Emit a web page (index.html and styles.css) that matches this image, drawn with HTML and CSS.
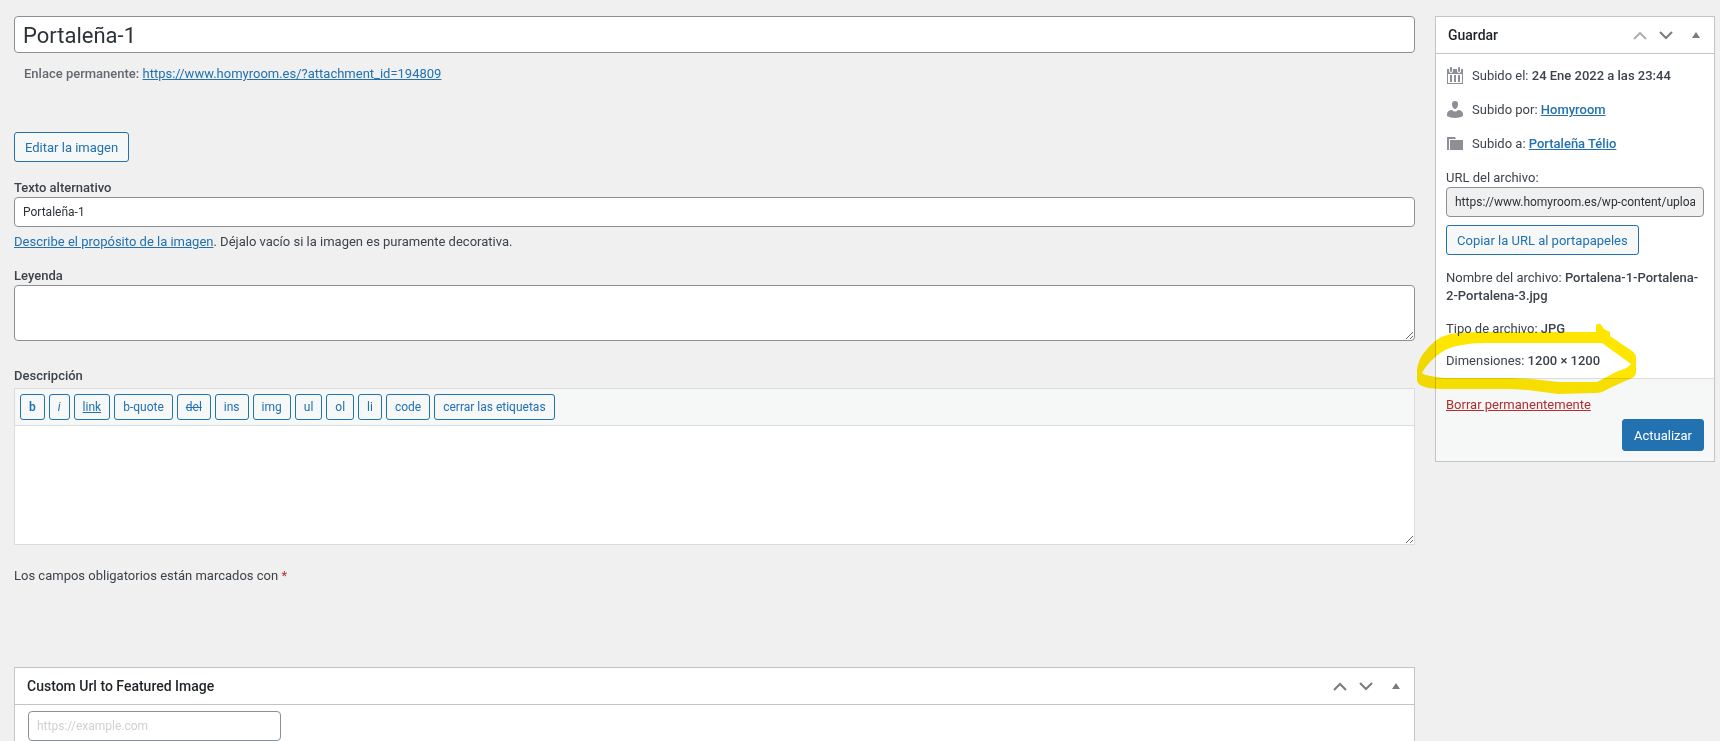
FILE: index.html
```html
<!DOCTYPE html>
<html lang="es">

<head>
	<meta charset="UTF-8">
	<meta name="viewport" content="width=device-width, initial-scale=1">
	<title>Editar medio</title>
	<link rel="stylesheet" href="styles.css">
</head>

<body>
	<form id="post">
		<div id="post-body">
			<input type="text" id="title" aria-label="Título" value="Portaleña-1">
			<p id="edit-slug"><strong>Enlace permanente:</strong> <a href="#">https://www.homyroom.es/?attachment_id=194809</a></p>

			<button type="button" class="button" id="edit-image">Editar la imagen</button>

			<div class="field">
				<label for="alt">Texto alternativo</label>
				<input type="text" id="alt" value="Portaleña-1">
				<p class="help"><a href="#">Describe el propósito de la imagen</a>. Déjalo vacío si la imagen es puramente decorativa.</p>
			</div>

			<div class="field">
				<label for="caption">Leyenda</label>
				<textarea id="caption"></textarea>
			</div>

			<div class="field description">
				<label for="content">Descripción</label>
				<div class="editor">
					<div class="quicktags">
						<button type="button" class="button small bold">b</button>
						<button type="button" class="button small italic">i</button>
						<button type="button" class="button small underline">link</button>
						<button type="button" class="button small">b-quote</button>
						<button type="button" class="button small strike">del</button>
						<button type="button" class="button small">ins</button>
						<button type="button" class="button small">img</button>
						<button type="button" class="button small">ul</button>
						<button type="button" class="button small">ol</button>
						<button type="button" class="button small">li</button>
						<button type="button" class="button small">code</button>
						<button type="button" class="button small">cerrar las etiquetas</button>
					</div>
					<textarea id="content"></textarea>
				</div>
			</div>

			<p class="required-note">Los campos obligatorios están marcados con <span class="required">*</span></p>

			<div class="postbox" id="custom-url">
				<div class="postbox-header">
					<h2>Custom Url to Featured Image</h2>
					<div class="handle-actions">
						<button type="button" aria-label="Subir"><svg width="14" height="9" viewBox="0 0 14 9"><path d="M1 8l6-6 6 6"/></svg></button>
						<button type="button" aria-label="Bajar"><svg width="14" height="9" viewBox="0 0 14 9"><path d="M1 1l6 6 6-6"/></svg></button>
						<button type="button" class="toggle" aria-label="Alternar panel"><svg width="8" height="9" viewBox="0 0 8 9"><path d="M4 1l4 6H0z"/></svg></button>
					</div>
				</div>
				<div class="inside">
					<input type="url" aria-label="Custom Url" placeholder="https://example.com">
				</div>
			</div>
		</div>

		<div id="side">
			<div class="postbox">
				<div class="postbox-header">
					<h2>Guardar</h2>
					<div class="handle-actions">
						<button type="button" class="off" aria-label="Subir"><svg width="14" height="9" viewBox="0 0 14 9"><path d="M1 8l6-6 6 6"/></svg></button>
						<button type="button" aria-label="Bajar"><svg width="14" height="9" viewBox="0 0 14 9"><path d="M1 1l6 6 6-6"/></svg></button>
						<button type="button" class="toggle" aria-label="Alternar panel"><svg width="8" height="9" viewBox="0 0 8 9"><path d="M4 1l4 6H0z"/></svg></button>
					</div>
				</div>
				<div class="misc">
					<p class="row">
						<svg class="icon" width="18" height="18" viewBox="0 0 18 18">
							<path fill-rule="evenodd" d="M1 2h16v15H1zM2 7v9h14V7z"/>
							<path d="M4 8h2v7H4zM8 8h2v7H8zM12 8h2v7h-2z"/>
							<path class="ring" d="M3 0h4v4a2 2 0 0 1-4 0zM11 0h4v4a2 2 0 0 1-4 0z"/>
							<path d="M4 1a1 1 0 0 1 2 0v3a1 1 0 0 1-2 0zM12 1a1 1 0 0 1 2 0v3a1 1 0 0 1-2 0z"/>
						</svg>
						<span>Subido el: <b>24 Ene 2022 a las 23:44</b></span>
					</p>
					<p class="row">
						<svg class="icon" width="18" height="18" viewBox="0 0 18 18"><path d="M9 0c2 0 3 1 3 3S11 8 9 8 6 5 6 3s1-3 3-3zM6 9q3 3 6 0c3 0 5 2 5 4v2c-2 1-5 2-8 2s-6-1-8-2v-2c0-2 2-4 5-4z"/></svg>
						<span>Subido por: <a href="#"><b>Homyroom</b></a></span>
					</p>
					<p class="row">
						<svg class="icon" width="18" height="18" viewBox="0 0 18 18"><path d="M1 2h8l1 2H3v11H1zM4 5h13v10H4z"/></svg>
						<span>Subido a: <a href="#"><b>Portaleña Télio</b></a></span>
					</p>
					<div class="file-url">
						<label for="url">URL del archivo:</label>
						<input type="text" id="url" readonly value="https://www.homyroom.es/wp-content/uploads/2022/01/Portalena-1-Portalena-2-Portalena-3.jpg">
						<button type="button" class="button">Copiar la URL al portapapeles</button>
					</div>
					<p>Nombre del archivo: <b>Portalena-1-Portalena-2-Portalena-3.jpg</b></p>
					<p>Tipo de archivo: <b>JPG</b></p>
					<div class="dimensions">
						Dimensiones: <b>1200 × 1200</b>
						<!-- highlighter loop round the dimensions -->
						<svg class="marker" width="222" height="72" viewBox="0 0 222 72"><path fill-rule="evenodd" d="M2 46Q4 36 8 31Q14 23 20 18Q27 13 35 11Q47 9 62 9H181V2Q185-1 187 3L189 6L195 9V13L217 28Q221 31 221 35V49Q221 53 217 55L197 64L187 69Q184 70 180 70L143 71L113 67L97 66H30Q16 66 10 64Q2 62 2 57ZM7 50Q9 53 30 55H97L117 56L143 59H182L203 48Q212 46 216 41L187 20H70Q56 20 47 22Q38 23 30 27Q23 31 17 37Q10 44 7 50Z"/></svg>
					</div>
				</div>
				<div class="actions">
					<a class="delete" href="#">Borrar permanentemente</a>
					<button type="submit" class="button primary">Actualizar</button>
				</div>
			</div>
		</div>
	</form>
</body>

</html>
```
FILE: styles.css
```css
* {
	box-sizing: border-box;
}
body {
	margin: 0;
	background: #f0f0f0;
	color: #3c434a;
	font-family: Roboto, "Open Sans", sans-serif;
	font-size: 13px;
	line-height: 18px;
}
p, h2 {
	margin: 0;
}
b, strong, h2 {
	font-weight: 500;
}
a {
	color: #2271b1;
}
input, textarea, button {
	font-family: inherit;
	margin: 0;
}
input, textarea {
	display: block;
	width: 100%;
	border: 1px solid #8c8f94;
	border-radius: 4px;
	background: #fff;
	color: #2c3338;
	font-size: 12px;
	padding: 0 8px;
}
input {
	height: 30px;
}
textarea {
	resize: vertical;
}
#post {
	display: grid;
	grid-template-columns: minmax(0, 1fr) 280px;
	gap: 20px;
	align-items: start;
	padding: 16px 5px 0 14px;
}
#title {
	height: 37px;
	padding-top: 2px;
	font-size: 22px;
}
#edit-slug {
	margin: 12px 10px 0;
	color: #646970;
}
.button {
	height: 30px;
	padding: 0 10px;
	border: 1px solid #2271b1;
	border-radius: 3px;
	background: #f6f7f7;
	color: #2271b1;
	font-size: 13px;
	white-space: nowrap;
	cursor: pointer;
}
#edit-image {
	margin: 49px 0 17px;
}
.field label {
	display: block;
	font-weight: 500;
}
.help {
	margin: 6px 0 16px;
}
#caption {
	height: 56px;
}
.description {
	margin-top: 26px;
}
.editor {
	margin-top: 3px;
	border: 1px solid #dcdcde;
}
.quicktags {
	display: flex;
	flex-wrap: wrap;
	gap: 4px;
	padding: 5px;
	background: #f6f7f7;
	border-bottom: 1px solid #dcdcde;
}
.small {
	height: 26px;
	padding: 0 8px;
	font-size: 12px;
}
.bold {
	font-weight: 600;
}
.italic {
	font-style: italic;
}
.underline {
	text-decoration: underline;
}
.strike {
	text-decoration: line-through;
}
#content {
	height: 118px;
	border: 0;
	border-radius: 0;
}
.required-note {
	margin: 22px 0 82px;
}
.required {
	color: #b32d2e;
}
.postbox {
	border: 1px solid #c3c4c7;
	background: #fff;
}
.postbox-header {
	display: flex;
	justify-content: space-between;
	align-items: center;
	height: 37px;
	padding: 0 8px 0 12px;
	border-bottom: 1px solid #c3c4c7;
}
.postbox-header h2 {
	font-size: 14px;
	color: #1d2327;
}
.handle-actions {
	display: flex;
	align-items: center;
}
.handle-actions button {
	display: flex;
	width: 26px;
	padding: 0 6px;
	border: 0;
	background: none;
	cursor: pointer;
}
.handle-actions path {
	fill: none;
	stroke: #787c82;
	stroke-width: 2;
}
.handle-actions .off {
	opacity: .6;
}
.handle-actions .toggle {
	width: 20px;
	margin-left: 7px;
}
.handle-actions .toggle path {
	fill: #787c82;
	stroke: none;
}
.inside {
	padding: 6px 13px 12px;
}
.inside input {
	width: 253px;
}
.inside input::placeholder {
	color: #d0d0d0;
}
.misc {
	padding: 5px 10px 8px;
}
.misc p {
	padding: 8px 0 7px;
}
.misc .row {
	display: flex;
	gap: 8px;
	padding: 8px 0;
}
.icon {
	fill: #8c8f94;
}
.icon .ring {
	fill: #fff;
}
.file-url {
	padding: 8px 0 6px;
}
.file-url label {
	display: block;
}
.file-url input {
	margin-bottom: 8px;
	background: #f0f0f1;
}
.dimensions {
	position: relative;
	padding-top: 7px;
}
.marker {
	position: absolute;
	left: -31px;
	top: -22px;
	fill: #ffe600;
	mix-blend-mode: multiply;
	pointer-events: none;
}
.actions {
	padding: 17px 10px 10px;
	border-top: 1px solid #dcdcde;
	background: #f6f7f7;
}
.delete {
	display: block;
	width: max-content;
	color: #b32d2e;
}
.primary {
	display: block;
	height: 32px;
	margin: 5px 0 0 auto;
	padding: 0 11px;
	background: #2271b1;
	color: #fff;
}
```
